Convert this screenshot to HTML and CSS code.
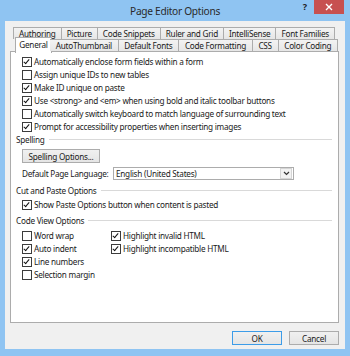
FILE: index.html
```html
<!DOCTYPE html>
<html lang="en">
<head>
  <meta charset="UTF-8" />
  <title>Page Editor Options</title>
  <link rel="stylesheet" href="styles.css">
</head>
<body>
  <div class="window">
    <div class="titlebar">
      <div></div>
      <div class="title">Page Editor Options</div>
      <div class="controls">
        <span class="help">?</span>
        <span class="close">
          <svg width="8" height="8" viewBox="0 0 8 8"><path d="M1 1L7 7M7 1L1 7" stroke="#fff" stroke-width="1.4"/></svg>
        </span>
      </div>
    </div>

    <div class="dialog">
      <div class="tabs">
        <div class="tab-row back">
          <div class="tab">Authoring</div>
          <div class="tab">Picture</div>
          <div class="tab">Code Snippets</div>
          <div class="tab">Ruler and Grid</div>
          <div class="tab">IntelliSense</div>
          <div class="tab">Font Families</div>
        </div>
        <div class="tab-row front">
          <div class="tab active">General</div>
          <div class="tab">AutoThumbnail</div>
          <div class="tab">Default Fonts</div>
          <div class="tab">Code Formatting</div>
          <div class="tab">CSS</div>
          <div class="tab">Color Coding</div>
        </div>
      </div>

      <div class="panel">
        <label class="check-row"><span class="cb checked"></span>Automatically enclose form fields within a form</label>
        <label class="check-row"><span class="cb"></span>Assign unique IDs to new tables</label>
        <label class="check-row"><span class="cb checked"></span>Make ID unique on paste</label>
        <label class="check-row"><span class="cb checked"></span>Use &lt;strong&gt; and &lt;em&gt; when using bold and italic toolbar buttons</label>
        <label class="check-row"><span class="cb"></span>Automatically switch keyboard to match language of surrounding text</label>
        <label class="check-row"><span class="cb checked"></span>Prompt for accessibility properties when inserting images</label>

        <div class="group-title spelling">Spelling</div>
        <div class="btn spell-btn">Spelling Options...</div>
        <div class="lang-row">
          <span class="lang-label">Default Page Language:</span>
          <div class="select">
            <span class="select-value">English (United States)</span>
            <span class="select-arrow">
              <svg width="7" height="5" viewBox="0 0 7 5"><path d="M1 1L3.5 3.5L6 1" fill="none" stroke="#333" stroke-width="1.2"/></svg>
            </span>
          </div>
        </div>

        <div class="group-title cut">Cut and Paste Options</div>
        <label class="check-row paste"><span class="cb checked"></span>Show Paste Options button when content is pasted</label>

        <div class="group-title code">Code View Options</div>
        <div class="code-grid">
          <label class="check-row"><span class="cb"></span>Word wrap</label>
          <label class="check-row"><span class="cb checked"></span>Highlight invalid HTML</label>
          <label class="check-row"><span class="cb checked"></span>Auto indent</label>
          <label class="check-row"><span class="cb checked"></span>Highlight incompatible HTML</label>
          <label class="check-row"><span class="cb checked"></span>Line numbers</label>
          <div></div>
          <label class="check-row"><span class="cb"></span>Selection margin</label>
        </div>
      </div>

      <div class="footer">
        <div class="btn default">OK</div>
        <div class="btn">Cancel</div>
      </div>
    </div>
  </div>
</body>
</html>
```

FILE: styles.css
```css
html, body {
  margin: 0;
  padding: 0;
  font-family: "Noto Sans", "Open Sans", sans-serif;
  color: #1a1a1a;
}
.window {
  width: 350px;
  height: 356px;
  box-sizing: border-box;
  background-color: #8fc4f2;
  padding: 0 5px 7px 5px;
  display: flex;
  flex-direction: column;
}
.titlebar {
  height: 21px;
  display: grid;
  grid-template-columns: 1fr auto 1fr;
  align-items: start;
}
.title {
  font-size: 10.2px;
  letter-spacing: -0.3px;
  line-height: 22px;
  color: #2a2a2a;
}
.controls {
  display: flex;
  justify-content: flex-end;
  align-items: flex-start;
}
.help {
  font-size: 9px;
  font-weight: bold;
  line-height: 14px;
  color: #222;
  margin-right: 7px;
}
.close {
  width: 30px;
  height: 14px;
  margin-right: 1px;
  background-color: #c75050;
  display: flex;
  align-items: center;
  justify-content: center;
}
.dialog {
  flex: 1;
  background-color: #f0f0f0;
  padding: 6px 6px 4px 5px;
  display: flex;
  flex-direction: column;
  font-size: 8.2px;
  letter-spacing: -0.25px;
}
.tabs {
  display: flex;
  flex-direction: column;
}
.tab-row {
  display: flex;
  height: 12px;
}
.tab-row.back {
  margin-left: 3px;
  margin-right: 4px;
}
.tab-row.front {
  margin-left: 7px;
  margin-right: 1px;
  position: relative;
  z-index: 2;
}
.tab {
  flex: auto;
  text-align: center;
  line-height: 11px;
  border: 1px solid #acacac;
  border-bottom: none;
  border-left: none;
  background: linear-gradient(#f3f3f3, #e6e6e6);
  white-space: nowrap;
}
.tab-row .tab:first-child {
  border-left: 1px solid #acacac;
}
.tab.active {
  background: #fff;
  height: 15px;
  margin: -2px -2px 0 -2px;
  border-left: 1px solid #acacac;
  border-right: 1px solid #acacac;
  flex: 0 0 35px;
  line-height: 13px;
}
.panel {
  height: 272px;
  box-sizing: border-box;
  background: #fff;
  border: 1px solid #acacac;
  padding: 3px 6px 0 5px;
  display: flex;
  flex-direction: column;
}
.check-row {
  display: flex;
  align-items: center;
  height: 13px;
  margin-left: 6px;
  white-space: nowrap;
}
.cb {
  width: 8px;
  height: 8px;
  border: 1px solid #3c3c3c;
  background: #fff;
  margin-right: 2px;
  flex: none;
  position: relative;
}
.cb.checked::after {
  content: "";
  position: absolute;
  left: 2px;
  top: 0px;
  width: 2px;
  height: 5px;
  border: solid #111;
  border-width: 0 1.5px 1.5px 0;
  transform: rotate(40deg);
}
.group-title {
  display: flex;
  align-items: center;
  height: 13px;
  white-space: nowrap;
}
.group-title::after {
  content: "";
  flex: 1;
  border-top: 1px solid #d9d9d9;
  margin-left: 4px;
}
.group-title.spelling { margin-top: 0; }
.group-title.cut { margin-top: 4px; }
.group-title.code { margin-top: 3px; }
.check-row.paste { margin-top: 1px; }
.btn {
  height: 14px;
  box-sizing: border-box;
  border: 1px solid #acacac;
  background: linear-gradient(#f0f0f0, #e5e5e5);
  display: flex;
  align-items: center;
  justify-content: center;
}
.spell-btn {
  width: 78px;
  margin: 3px 0 0 6px;
}
.lang-row {
  display: flex;
  align-items: center;
  height: 13px;
  margin: 4px 0 0 6px;
}
.lang-label {
  width: 91px;
  white-space: nowrap;
}
.select {
  width: 181px;
  height: 13px;
  box-sizing: border-box;
  border: 1px solid #acacac;
  display: flex;
  align-items: center;
  justify-content: space-between;
}
.select-value {
  padding-left: 2px;
}
.select-arrow {
  width: 10px;
  height: 9px;
  margin-right: 1px;
  border: 1px solid #d5d5d5;
  background: #f2f2f2;
  display: flex;
  align-items: center;
  justify-content: center;
}
.code-grid {
  display: grid;
  grid-template-columns: 89px auto;
  margin-top: 2px;
}
.footer {
  display: flex;
  justify-content: flex-end;
  gap: 7px;
  margin-top: 8px;
}
.footer .btn {
  width: 50px;
}
.footer .btn.default {
  border-color: #3c9ce8;
}
```
